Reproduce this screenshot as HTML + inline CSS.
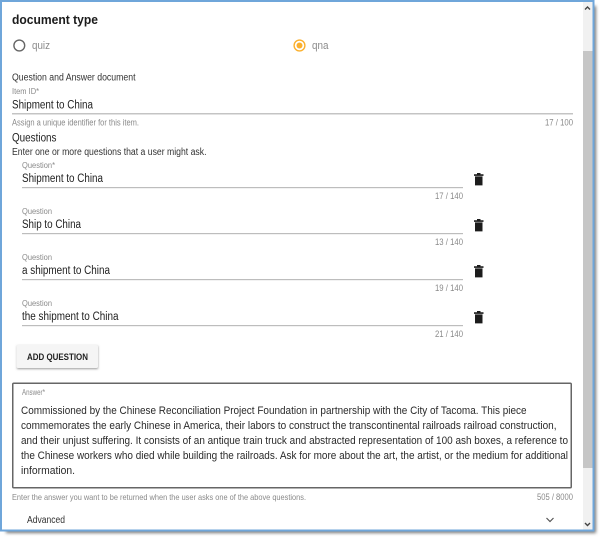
<!DOCTYPE html>
<html><head><meta charset="utf-8"><style>
html,body{margin:0;padding:0;background:#fff;width:600px;height:538px;overflow:hidden}
svg{display:block;font-family:"Liberation Sans",sans-serif}
</style></head><body>
<svg width="600" height="538" viewBox="0 0 600 538" xmlns="http://www.w3.org/2000/svg">
<defs>
<filter id="sh" x="-5%" y="-5%" width="110%" height="110%"><feGaussianBlur stdDeviation="1.6"/></filter>
<filter id="bs" x="-20%" y="-30%" width="140%" height="170%"><feGaussianBlur stdDeviation="1"/></filter>
<filter id="soft" x="0" y="0" width="100%" height="100%"><feGaussianBlur stdDeviation="0.25"/></filter>
<g id="tr"><path fill="#1c1c1c" d="M1 2.200h9.500v1.700H1zM4 1h3.500v1.400H4zM2 4.400h7.500v9H2z"/></g>
</defs>
<rect x="6" y="6" width="590" height="527" fill="#777" filter="url(#sh)"/>
<rect x="1" y="1" width="592.500" height="529.500" fill="#fff" stroke="#6fa6da" stroke-width="2"/>
<rect x="583" y="2" width="9.500" height="527.500" fill="#f1f1f1"/>
<rect x="583" y="51" width="9.500" height="417" fill="#c6c6c6"/>
<path d="M585 9.500l2.500-2.500 2.500 2.500" fill="none" stroke="#444" stroke-width="1.400"/>
<path d="M585 523l2.500 2.500 2.500-2.500" fill="none" stroke="#444" stroke-width="1.400"/>

<g filter="url(#soft)">
<text x="12" y="24" font-size="12.500" font-weight="700" fill="#1a1a1a" textLength="86" lengthAdjust="spacingAndGlyphs">document type</text>
<circle cx="19.300" cy="45.500" r="5.400" fill="none" stroke="#666" stroke-width="1.400"/>
<text x="32" y="49" font-size="11" fill="#8a8a8a" textLength="18" lengthAdjust="spacingAndGlyphs">quiz</text>
<circle cx="299.500" cy="45.500" r="5.400" fill="none" stroke="#fbb02d" stroke-width="1.400"/>
<circle cx="299.500" cy="45.500" r="3" fill="#fbb02d"/>
<text x="312" y="49" font-size="11" fill="#8a8a8a" textLength="16.500" lengthAdjust="spacingAndGlyphs">qna</text>

<text x="12" y="80.500" font-size="10" fill="#333" textLength="123.500" lengthAdjust="spacingAndGlyphs">Question and Answer document</text>
<text x="12" y="94" font-size="8.500" fill="#8a8a8a" textLength="27" lengthAdjust="spacingAndGlyphs">Item ID*</text>
<text x="12" y="108.500" font-size="11.500" fill="#222" textLength="81" lengthAdjust="spacingAndGlyphs">Shipment to China</text>
<rect x="12" y="113" width="561" height="1.500" fill="#c4c4c4"/>
<text x="12" y="125.500" font-size="8.800" fill="#8a8a8a" textLength="127" lengthAdjust="spacingAndGlyphs">Assign a unique identifier for this item.</text>
<text x="573" y="125.500" font-size="8.800" fill="#8a8a8a" text-anchor="end" textLength="28" lengthAdjust="spacingAndGlyphs">17 / 100</text>
<text x="12" y="141.500" font-size="11.500" fill="#222" textLength="44.500" lengthAdjust="spacingAndGlyphs">Questions</text>
<text x="12" y="155" font-size="10" fill="#333" textLength="194.500" lengthAdjust="spacingAndGlyphs">Enter one or more questions that a user might ask.</text>

<text x="22" y="168" font-size="8.500" fill="#8a8a8a" textLength="33" lengthAdjust="spacingAndGlyphs">Question*</text>
<text x="22" y="182" font-size="11.500" fill="#222" textLength="81" lengthAdjust="spacingAndGlyphs">Shipment to China</text>
<rect x="22" y="187" width="441" height="1.200" fill="#bdbdbd"/>
<text x="463" y="199" font-size="8.800" fill="#8a8a8a" text-anchor="end" textLength="28" lengthAdjust="spacingAndGlyphs">17 / 140</text>
<use href="#tr" x="473" y="172"/>

<text x="22" y="214" font-size="8.500" fill="#8a8a8a" textLength="30" lengthAdjust="spacingAndGlyphs">Question</text>
<text x="22" y="228" font-size="11.500" fill="#222" textLength="59" lengthAdjust="spacingAndGlyphs">Ship to China</text>
<rect x="22" y="233" width="441" height="1.200" fill="#bdbdbd"/>
<text x="463" y="245" font-size="8.800" fill="#8a8a8a" text-anchor="end" textLength="28" lengthAdjust="spacingAndGlyphs">13 / 140</text>
<use href="#tr" x="473" y="218"/>

<text x="22" y="260" font-size="8.500" fill="#8a8a8a" textLength="30" lengthAdjust="spacingAndGlyphs">Question</text>
<text x="22" y="274" font-size="11.500" fill="#222" textLength="88" lengthAdjust="spacingAndGlyphs">a shipment to China</text>
<rect x="22" y="279" width="441" height="1.200" fill="#bdbdbd"/>
<text x="463" y="291" font-size="8.800" fill="#8a8a8a" text-anchor="end" textLength="28" lengthAdjust="spacingAndGlyphs">19 / 140</text>
<use href="#tr" x="473" y="264"/>

<text x="22" y="306" font-size="8.500" fill="#8a8a8a" textLength="30" lengthAdjust="spacingAndGlyphs">Question</text>
<text x="22" y="320" font-size="11.500" fill="#222" textLength="96.500" lengthAdjust="spacingAndGlyphs">the shipment to China</text>
<rect x="22" y="325" width="441" height="1.200" fill="#bdbdbd"/>
<text x="463" y="337" font-size="8.800" fill="#8a8a8a" text-anchor="end" textLength="28" lengthAdjust="spacingAndGlyphs">21 / 140</text>
<use href="#tr" x="473" y="310"/>

<rect x="17" y="346" width="81" height="23" fill="#999" filter="url(#bs)"/>
<rect x="16.500" y="345" width="81.500" height="23" rx="1.500" fill="#f5f5f5"/>
<text x="27" y="360" font-size="9" font-weight="700" fill="#222" textLength="61" lengthAdjust="spacingAndGlyphs">ADD QUESTION</text>

<rect x="12.750" y="383.250" width="558.500" height="104.500" rx="1" fill="#fff" stroke="#666" stroke-width="1.500"/>
<text x="22" y="395" font-size="8.500" fill="#8a8a8a" textLength="23" lengthAdjust="spacingAndGlyphs">Answer*</text>
<g font-size="11" fill="#2a2a2a">
<text x="21" y="414" textLength="505.500" lengthAdjust="spacingAndGlyphs">Commissioned by the Chinese Reconciliation Project Foundation in partnership with the City of Tacoma. This piece</text>
<text x="21" y="429" textLength="535.500" lengthAdjust="spacingAndGlyphs">commemorates the early Chinese in America, their labors to construct the transcontinental railroads railroad construction,</text>
<text x="21" y="444" textLength="547" lengthAdjust="spacingAndGlyphs">and their unjust suffering. It consists of an antique train truck and abstracted representation of 100 ash boxes, a reference to</text>
<text x="21" y="459" textLength="547" lengthAdjust="spacingAndGlyphs">the Chinese workers who died while building the railroads. Ask for more about the art, the artist, or the medium for additional</text>
<text x="21" y="474" textLength="54" lengthAdjust="spacingAndGlyphs">information.</text>
</g>
<text x="12" y="500" font-size="8.500" fill="#8a8a8a" textLength="294" lengthAdjust="spacingAndGlyphs">Enter the answer you want to be returned when the user asks one of the above questions.</text>
<text x="573" y="500" font-size="8.800" fill="#8a8a8a" text-anchor="end" textLength="36" lengthAdjust="spacingAndGlyphs">505 / 8000</text>
<text x="27" y="523" font-size="10" fill="#333" textLength="38" lengthAdjust="spacingAndGlyphs">Advanced</text>
<path d="M546.500 518l3.500 3.500 3.500-3.500" fill="none" stroke="#555" stroke-width="1.200"/>
</g>
</svg>
</body></html>
